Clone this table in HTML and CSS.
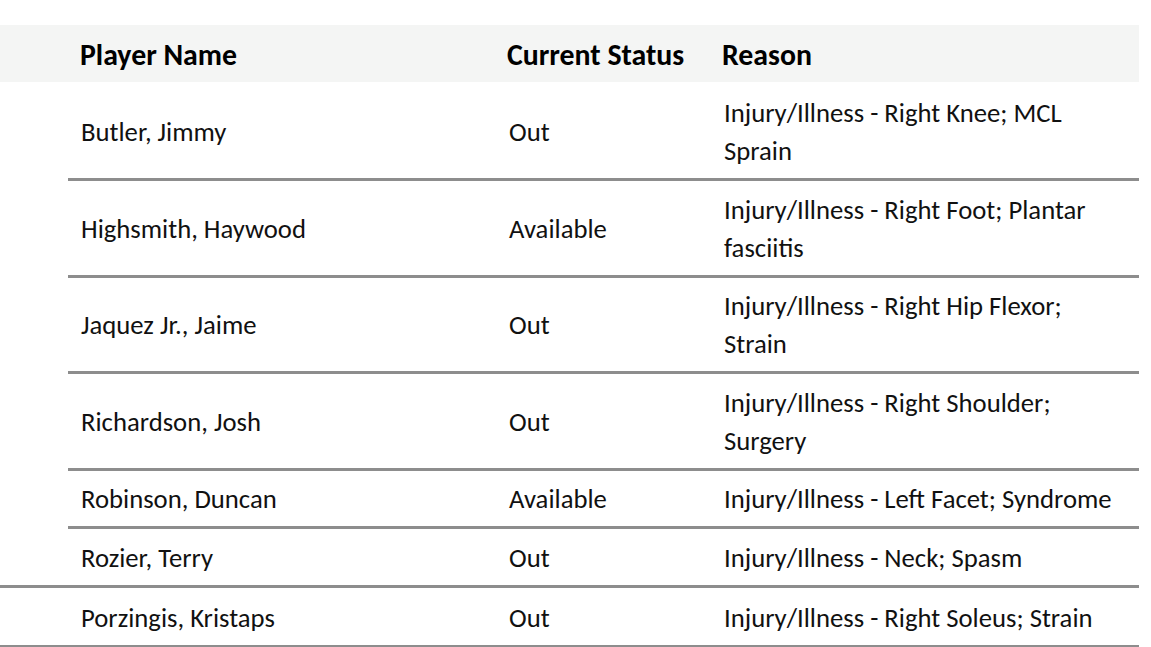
FILE: index.html
```html
<!DOCTYPE html>
<html lang="en">
<head>
<meta charset="utf-8">
<title>Injury Report</title>
<link rel="stylesheet" href="styles.css">
</head>
<body>
<div class="report">
  <div class="row head">
    <div class="sp"></div>
    <div class="c name">Player Name</div>
    <div class="c status">Current Status</div>
    <div class="c reason">Reason</div>
  </div>
  <div class="row first">
    <div class="sp"></div>
    <div class="c name">Butler, Jimmy</div>
    <div class="c status">Out</div>
    <div class="c reason">Injury/Illness - Right Knee; MCL Sprain</div>
  </div>
  <div class="row">
    <div class="sp"></div>
    <div class="c name">Highsmith, Haywood</div>
    <div class="c status">Available</div>
    <div class="c reason">Injury/Illness - Right Foot; Plantar fasciitis</div>
  </div>
  <div class="row">
    <div class="sp"></div>
    <div class="c name">Jaquez Jr., Jaime</div>
    <div class="c status">Out</div>
    <div class="c reason">Injury/Illness - Right Hip Flexor; Strain</div>
  </div>
  <div class="row">
    <div class="sp"></div>
    <div class="c name">Richardson, Josh</div>
    <div class="c status">Out</div>
    <div class="c reason">Injury/Illness - Right Shoulder; Surgery</div>
  </div>
  <div class="row">
    <div class="sp"></div>
    <div class="c name">Robinson, Duncan</div>
    <div class="c status">Available</div>
    <div class="c reason">Injury/Illness - Left Facet; Syndrome</div>
  </div>
  <div class="row full">
    <div class="sp"></div>
    <div class="c name">Rozier, Terry</div>
    <div class="c status">Out</div>
    <div class="c reason">Injury/Illness - Neck; Spasm</div>
  </div>
  <div class="row full last">
    <div class="sp"></div>
    <div class="c name">Porzingis, Kristaps</div>
    <div class="c status">Out</div>
    <div class="c reason">Injury/Illness - Right Soleus; Strain</div>
  </div>
</div>
</body>
</html>
```
FILE: styles.css
```css
html, body {
  margin: 0;
  padding: 0;
  background: #ffffff;
}

body {
  font-family: "Carlito", "Calibri", "Liberation Sans", sans-serif;
  font-size: 26.7px;
  line-height: 38px;
  color: #111111;
  overflow: hidden;
}

.report {
  width: 1139px;
  padding-top: 25px;
}

.row {
  display: grid;
  grid-template-columns: 68px 429px 213px 429px;
}

.c {
  padding: 9.5px 14px 8px 13px;
  border-bottom: 3px solid #8d8d8d;
  display: flex;
  align-items: center;
}

.status {
  padding-left: 12px;
}

.reason {
  padding-left: 14px;
}

.row.head {
  background: #f4f5f4;
}

.row.head .c {
  border-bottom: none;
  padding-top: 11px;
  padding-bottom: 8px;
  font-size: 29.8px;
  font-weight: bold;
  color: #000000;
  white-space: nowrap;
}

.row.head .name {
  padding-left: 12px;
}

.row.head .status {
  padding-left: 10px;
}

.row.head .reason {
  padding-left: 12px;
}

.row.first .c {
  padding-top: 12px;
}

.row.full .sp {
  border-bottom: 3px solid #8d8d8d;
}

.row.last .c {
  padding-top: 11px;
  padding-bottom: 8.5px;
}
```
